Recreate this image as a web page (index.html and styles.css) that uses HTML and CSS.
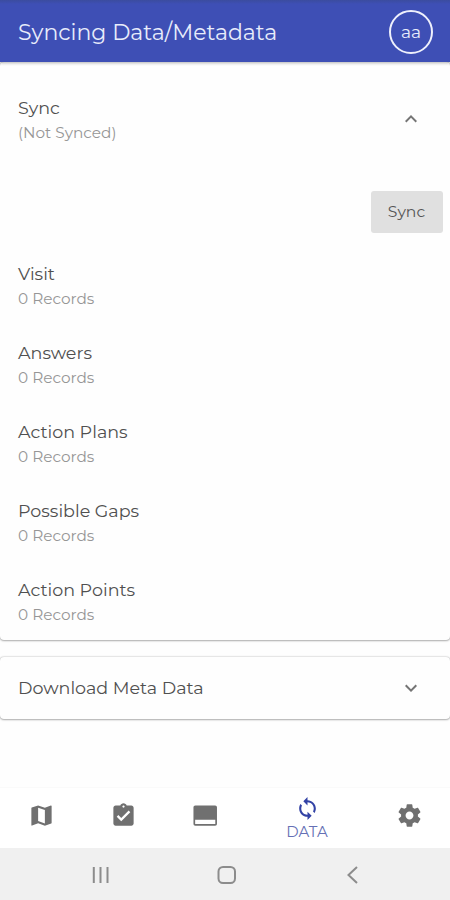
FILE: index.html
```
<!DOCTYPE html>
<html lang="en">
<head>
<meta charset="utf-8">
<meta name="viewport" content="width=device-width, initial-scale=1">
<title>Syncing Data/Metadata</title>
<link rel="stylesheet" href="styles.css">
</head>
<body>
<div class="app">
  <header class="toolbar">
    <h1 class="toolbar-title">Syncing Data/Metadata</h1>
    <div class="avatar">aa</div>
  </header>
  <main class="content">
    <section class="panel panel-open">
      <div class="panel-header">
        <div class="entry"><div class="name">Sync</div><div class="detail">(Not Synced)</div></div>
        <svg class="chevron" viewBox="0 0 24 24"><path d="M12 8l-6 6 1.41 1.41L12 10.83l4.59 4.58L18 14z"/></svg>
      </div>
      <div class="actions"><button class="sync-button">Sync</button></div>
      <div class="list">
        <div class="entry"><div class="name">Visit</div><div class="detail">0 Records</div></div>
        <div class="entry"><div class="name">Answers</div><div class="detail">0 Records</div></div>
        <div class="entry"><div class="name">Action Plans</div><div class="detail">0 Records</div></div>
        <div class="entry"><div class="name">Possible Gaps</div><div class="detail">0 Records</div></div>
        <div class="entry"><div class="name">Action Points</div><div class="detail">0 Records</div></div>
      </div>
    </section>
    <section class="panel panel-closed">
      <div class="name">Download Meta Data</div>
      <svg class="chevron" viewBox="0 0 24 24"><path d="M16.59 8.59L12 13.17 7.41 8.59 6 10l6 6 6-6z"/></svg>
    </section>
  </main>
  <nav class="tabs">
    <a class="tab"><svg viewBox="0 0 24 24"><path d="M20.5 3l-.16.03L15 5.1 9 3 3.36 4.9c-.21.07-.36.25-.36.48V20.5c0 .28.22.5.5.5l.16-.03L9 18.9l6 2.1 5.64-1.9c.21-.07.36-.25.36-.48V3.5c0-.28-.22-.5-.5-.5zM15 19l-6-2.11V5l6 2.11V19z"/></svg></a>
    <a class="tab"><svg viewBox="0 0 24 24"><path d="M19 3h-4.18C14.4 1.84 13.3 1 12 1c-1.3 0-2.4.84-2.82 2H5c-1.1 0-2 .9-2 2v14c0 1.1.9 2 2 2h14c1.1 0 2-.9 2-2V5c0-1.1-.9-2-2-2zm-7 0c.55 0 1 .45 1 1s-.45 1-1 1-1-.45-1-1 .45-1 1-1zm-2 14l-4-4 1.41-1.41L10 14.17l6.59-6.59L18 9l-8 8z"/></svg></a>
    <a class="tab"><svg viewBox="0 0 24 24"><path d="M20.500 3H3c-1.100 0-1.700.7-1.700 1.700v14.600c0 1 .6 1.700 1.700 1.700h17.500c1.100 0 1.700-.7 1.700-1.700V4.700c0-1-.6-1.700-1.700-1.700zm.2 16.500H2.800v-3.700h17.900v3.700z"/></svg></a>
    <a class="tab active"><svg viewBox="0 0 24 24"><path d="M12 4V1L8 5l4 4V6c3.310 0 6 2.690 6 6 0 1.010-.25 1.970-.7 2.800l1.460 1.460C19.540 15.030 20 13.570 20 12c0-4.420-3.580-8-8-8zm0 14c-3.310 0-6-2.690-6-6 0-1.010.25-1.970.7-2.800L5.240 7.740C4.460 8.970 4 10.430 4 12c0 4.420 3.580 8 8 8v3l4-4-4-4v3z"/></svg><span class="tab-label">DATA</span></a>
    <a class="tab"><svg viewBox="0 0 24 24"><path d="M19.430 12.980c.04-.32.07-.64.07-.98s-.03-.66-.07-.98l2.110-1.650c.19-.15.24-.42.12-.64l-2-3.460c-.12-.22-.39-.3-.61-.22l-2.490 1c-.52-.4-1.080-.73-1.690-.98l-.38-2.650C14.460 2.180 14.250 2 14 2h-4c-.25 0-.46.18-.49.42l-.38 2.650c-.61.25-1.170.59-1.690.98l-2.490-1c-.23-.09-.49 0-.61.22l-2 3.460c-.13.22-.07.49.12.64l2.110 1.650c-.04.32-.07.65-.07.98s.03.66.07.98l-2.110 1.650c-.19.15-.24.42-.12.64l2 3.460c.12.22.39.3.61.22l2.490-1c.52.4 1.080.73 1.690.98l.38 2.650c.03.24.24.42.49.42h4c.25 0 .46-.18.49-.42l.38-2.650c.61-.25 1.170-.59 1.690-.98l2.490 1c.23.09.49 0 .61-.22l2-3.460c.12-.22.07-.49-.12-.64l-2.110-1.650zM12 15.500c-1.930 0-3.500-1.570-3.500-3.500s1.570-3.500 3.500-3.500 3.500 1.570 3.500 3.500-1.570 3.500-3.500 3.500z"/></svg></a>
  </nav>
  <footer class="system-bar">
    <svg viewBox="0 0 24 24"><path d="M4.800 4v16M11.500 4v16M18.500 4v16"/></svg>
    <svg viewBox="0 0 24 24"><rect x="3.500" y="4" width="16.500" height="16" rx="4.500"/></svg>
    <svg viewBox="0 0 24 24"><path d="M17 4l-8.500 8 8.500 8"/></svg>
  </footer>
</div>
</body>
</html>
```
FILE: styles.css
```
* { box-sizing: border-box; }
body { margin: 0; background: #fefefe; color: #505050; font-family: Montserrat, Inter, sans-serif; }
.app { height: 900px; display: flex; flex-direction: column; overflow: hidden; }
.toolbar {
  height: 62px; flex: none; padding: 0 17px 0 18px;
  display: flex; align-items: center; justify-content: space-between;
  background: linear-gradient(#3b4c9f, #3e4fb5 4px);
  box-shadow: 0 1px 3px rgba(0, 0, 0, .3);
  color: #e8ecfb; z-index: 1;
}
.toolbar-title { margin: 0; padding-top: 3px; font-size: 22px; line-height: 28px; font-weight: 400; white-space: nowrap; }
.avatar {
  width: 44px; height: 44px; border: 2px solid #eef0fc; border-radius: 50%; margin-top: 1px;
  display: flex; align-items: center; justify-content: center; font-size: 17px;
}
.content { flex: 1; }
.panel { background: #fefefe; border-radius: 4px; box-shadow: 0 1px 2px rgba(0, 0, 0, .25), 0 0 2px rgba(0, 0, 0, .32); }
.panel-open { height: 578px; }
.panel-header { height: 129px; padding: 34px 27px 0 18px; display: flex; justify-content: space-between; }
.chevron { width: 24px; height: 24px; fill: #757575; }
.panel-header .chevron { margin-top: 11px; }
.name { font-size: 17.5px; line-height: 24px; font-weight: 400; white-space: nowrap; }
.detail { padding-top: 1px; font-size: 15.3px; line-height: 24px; color: #969696; white-space: nowrap; }
.actions { height: 71px; display: flex; justify-content: flex-end; padding-right: 7px; }
.sync-button {
  width: 72px; height: 42px; padding: 0 1px 1px 0; border: 0; border-radius: 3px; background: #e0e0e0; color: #555;
  font: 15.6px Montserrat, Inter, sans-serif;
}
.list { display: grid; grid-auto-rows: 79px; padding-left: 18px; }
.panel-closed {
  height: 62px; margin-top: 17px; padding: 0 27px 0 18px;
  display: flex; align-items: center; justify-content: space-between;
}
.tabs {
  height: 61px; flex: none; display: grid; grid-template-columns: 82px 82px 82px 122px 82px;
  border-top: 1px solid #fafafa; background: #fff; color: #707070;
}
.tab { display: flex; flex-direction: column; align-items: center; justify-content: center; padding-bottom: 5px; }
.tab svg { width: 27px; height: 27px; fill: currentColor; }
.tab.active { color: #3242a5; padding-bottom: 0; }
.tab.active svg { width: 25px; height: 25px; }
.tab-label { padding-top: 1px; font-size: 15px; line-height: 19px; color: #6570b5; }
.system-bar {
  height: 52px; flex: none; background: #f0f0f0; padding: 2px 86px 0 89px;
  display: flex; align-items: center; justify-content: space-between;
}
.system-bar svg { width: 24px; height: 24px; fill: none; stroke: #8c8c8c; stroke-width: 2; }
```
